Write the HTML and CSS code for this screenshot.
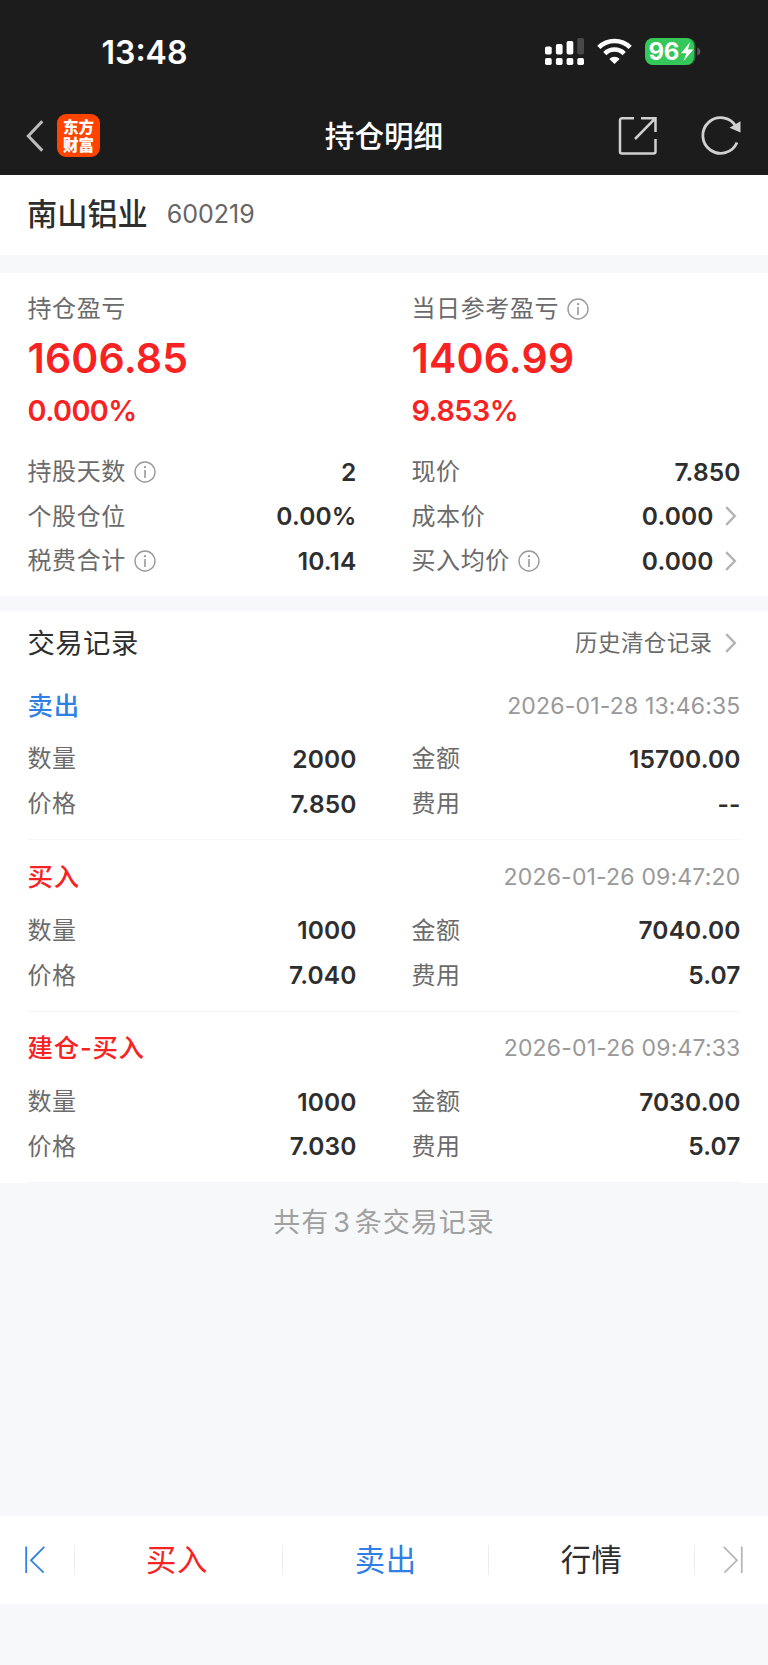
FILE: index.html
```html
<!DOCTYPE html>
<html lang="zh-CN">
<head>
<meta charset="utf-8">
<title>持仓明细</title>
<link rel="stylesheet" href="styles.css">
</head>
<body>
<svg class="defs" width="0" height="0" aria-hidden="true">
  <symbol id="info" viewBox="0 0 22 22"><circle cx="11" cy="11" r="10" fill="none" stroke="#999" stroke-width="1.4"/><path d="M11 9v8" stroke="#999" stroke-width="1.6"/><circle cx="11" cy="6.1" r="1.2" fill="#999"/></symbol>
  <symbol id="chev" viewBox="0 0 12 20"><path d="M1.2 1.2 9.8 10 1.2 18.8" fill="none" stroke="#b3b3b3" stroke-width="2.4"/></symbol>
</svg>
<div class="page">
  <header class="top">
    <div class="status">
      <span class="clock">13:48</span>
      <svg class="status-icons" width="160" height="30" viewBox="0 0 160 30">
        <g fill="#fff">
          <rect x="2" y="10.5" width="6.7" height="8" rx="1.7"/><rect x="12.9" y="8" width="6.7" height="10.5" rx="1.7"/><rect x="23.6" y="5" width="6.7" height="13.5" rx="1.7"/>
          <rect x="2" y="22" width="6.7" height="7" rx="1.7"/><rect x="12.9" y="22" width="6.7" height="7" rx="1.7"/><rect x="23.6" y="22" width="6.7" height="7" rx="1.7"/><rect x="34.3" y="22" width="6.7" height="7" rx="1.7"/>
        </g>
        <rect x="34.3" y="2" width="6.7" height="16.5" rx="1.7" fill="#484848"/>
        <g fill="none" stroke="#fff"><path d="M55.8 11.4a22.5 22.5 0 0 1 31.4 0" stroke-width="4.6"/><path d="M61.8 17.6a13.8 13.8 0 0 1 19.4 0" stroke-width="4.5"/></g>
        <path d="M66.3 22.9a7.5 7.5 0 0 1 10.4 0L71.5 28z" fill="#fff"/>
        <path d="M154.3 11.2q3.2 1.8 3.2 4.3t-3.2 4.3z" fill="#5a5a5a"/>
        <rect x="103" y="2" width="49.5" height="27" rx="8" fill="#2b6c3c"/>
        <rect x="102" y="2" width="49" height="27" rx="8" fill="#34c759"/>
        <text class="batt" x="105.5" y="24.3">96</text>
        <path d="M147.2 6 138 17.3h5.4L140.6 25l9.8-11.5h-5.5z" fill="#fff"/>
      </svg>
    </div>
    <div class="nav">
      <div class="nav-left">
        <svg width="18" height="32" viewBox="0 0 18 32"><path d="M16.3 1.3 2.3 16l14 14.6" fill="none" stroke="#bdbdbd" stroke-width="3"/></svg>
        <div class="brand">东方<br>财富</div>
      </div>
      <h1>持仓明细</h1>
      <div class="nav-right">
        <svg width="40" height="40" viewBox="0 0 40 40" fill="none" stroke="#d0d0d0" stroke-width="2.5"><path d="M17 2.2H5A2 2 0 0 0 3 4.2V35.5a2 2 0 0 0 2 2H36.5a2 2 0 0 0 2-2V23M24 2.2H38.5V16M38.5 2.2 18 23" /></svg>
        <svg width="42" height="42" viewBox="0 0 42 42"><path d="M37 27.5A17.8 17.8 0 1 1 36 11.5" fill="none" stroke="#d0d0d0" stroke-width="2.8"/><path d="M29.5 12.7 40.5 6.2V17.6z" fill="#d0d0d0"/></svg>
      </div>
    </div>
  </header>

  <section class="stock"><h2>南山铝业</h2><span>600219</span></section>

  <section class="summary">
    <div class="cols">
      <div>
        <p class="label head">持仓盈亏</p><p class="big">1606.85</p><p class="pct">0.000%</p>
        <div class="row"><span class="label">持股天数<svg class="info"><use href="#info"/></svg></span><b>2</b></div>
        <div class="row"><span class="label">个股仓位</span><b>0.00%</b></div>
        <div class="row"><span class="label">税费合计<svg class="info"><use href="#info"/></svg></span><b>10.14</b></div>
      </div>
      <div>
        <p class="label head">当日参考盈亏<svg class="info"><use href="#info"/></svg></p><p class="big">1406.99</p><p class="pct">9.853%</p>
        <div class="row"><span class="label">现价</span><b>7.850</b></div>
        <div class="row"><span class="label">成本价</span><b>0.000<svg class="chev"><use href="#chev"/></svg></b></div>
        <div class="row"><span class="label">买入均价<svg class="info"><use href="#info"/></svg></span><b>0.000<svg class="chev"><use href="#chev"/></svg></b></div>
      </div>
    </div>
  </section>

  <section class="records">
    <div class="records-head"><h3>交易记录</h3><span class="history">历史清仓记录<svg class="chev"><use href="#chev"/></svg></span></div>
    <article class="record">
      <div class="record-title"><strong class="sell">卖出</strong><time>2026-01-28 13:46:35</time></div>
      <div class="cols">
        <div><div class="row"><span class="label">数量</span><b>2000</b></div><div class="row"><span class="label">价格</span><b>7.850</b></div></div>
        <div><div class="row"><span class="label">金额</span><b>15700.00</b></div><div class="row"><span class="label">费用</span><b>--</b></div></div>
      </div>
    </article>
    <article class="record">
      <div class="record-title"><strong class="buy">买入</strong><time>2026-01-26 09:47:20</time></div>
      <div class="cols">
        <div><div class="row"><span class="label">数量</span><b>1000</b></div><div class="row"><span class="label">价格</span><b>7.040</b></div></div>
        <div><div class="row"><span class="label">金额</span><b>7040.00</b></div><div class="row"><span class="label">费用</span><b>5.07</b></div></div>
      </div>
    </article>
    <article class="record">
      <div class="record-title"><strong class="buy">建仓-买入</strong><time>2026-01-26 09:47:33</time></div>
      <div class="cols">
        <div><div class="row"><span class="label">数量</span><b>1000</b></div><div class="row"><span class="label">价格</span><b>7.030</b></div></div>
        <div><div class="row"><span class="label">金额</span><b>7030.00</b></div><div class="row"><span class="label">费用</span><b>5.07</b></div></div>
      </div>
    </article>
  </section>

  <p class="total">共有<span>3</span>条交易记录</p>

  <nav class="actions">
    <a class="edge first"><svg width="20" height="28" viewBox="0 0 20 28" fill="none" stroke="#2f80e4" stroke-width="1.8"><path d="M1.2 .5V27M19.3 .8 6 14.3 18.6 26.7"/></svg></a>
    <a class="tab buy">买入</a><a class="tab sell">卖出</a><a class="tab">行情</a>
    <a class="edge last"><svg width="20" height="28" viewBox="0 0 20 28" fill="none" stroke="#b8b8b8" stroke-width="1.8"><path d="M18.8 .5V27M.7 .8 14 14.3 1.4 26.7"/></svg></a>
  </nav>
</div>
</body>
</html>
```
FILE: styles.css
```css
* { box-sizing: border-box; margin: 0; padding: 0; }
body { background: #f6f8fa; color: #2e2e2e; font-family: Inter, "Noto Sans CJK SC", sans-serif; }
.defs { display: block; position: absolute; }
.page { width: 768px; height: 1665px; display: flex; flex-direction: column; background: #f6f8fa; }
.top { height: 174.5px; background: #1c1c1c; color: #fff; flex: none; }
.status { height: 98px; padding: 7px 65px 0 101.5px; display: flex; align-items: center; justify-content: space-between; }
.clock { font-size: 32px; font-weight: 600; }
.status-icons { display: block; margin-top: -2.5px; }
.batt { font: 700 24px Inter, sans-serif; fill: #fff; letter-spacing: -.3px; }
.nav { height: 76px; display: grid; grid-template-columns: 1fr auto 1fr; align-items: center; padding: 0 26px; }
.nav-left { display: flex; align-items: center; gap: 13px; }
.brand { width: 43px; height: 43px; margin-top: -2px; padding: 3px 0 0 6px; border-radius: 9px; background: #ff4400; font: 900 15.5px/18px "Noto Sans CJK SC", sans-serif; }
.nav h1 { font-size: 29.6px; font-weight: 500; line-height: 40px; padding-bottom: 1px; }
.nav-right { display: flex; align-items: center; justify-content: flex-end; gap: 43px; }
.stock { height: 80.5px; background: #fff; display: flex; align-items: center; gap: 19px; padding: 0 27px 2px; flex: none; }
.stock h2 { font-size: 30.2px; font-weight: 500; padding-bottom: 3px; }
.stock span { font-size: 25px; color: #666; }
.summary { margin-top: 18px; height: 323px; padding: 14px 27.5px 0; background: #fff; flex: none; }
.cols { display: grid; grid-template-columns: 1fr 1fr; column-gap: 55px; }
.label { font-size: 24px; line-height: 40px; letter-spacing: .6px; color: #6b6b6b; font-weight: 400; display: flex; align-items: center; margin-top: -1px; padding-bottom: 0; }
.row .label { margin-top: 1px; }
.head { height: 44px; margin: 0; }
.info { width: 22px; height: 22px; margin: 0 0 0 8px; display: block; }
.big { height: 55px; line-height: 55px; font-size: 41px; font-weight: 600; letter-spacing: .15px; color: #f72323; }
.pct { height: 50px; line-height: 50px; font-size: 28.8px; font-weight: 600; letter-spacing: -.55px; color: #f72323; margin-bottom: 13.2px; }
.row { height: 44.7px; display: flex; align-items: center; justify-content: space-between; }
.row b { font-size: 24.5px; font-weight: 600; letter-spacing: .12px; display: flex; align-items: center; }
.chev { width: 12px; height: 20px; margin: 0 4px 0 11px; display: block; }
.records { margin-top: 14.5px; background: #fff; padding: 6.5px 27.5px 0; flex: none; }
.records-head { height: 52px; display: flex; align-items: center; justify-content: space-between; }
.records-head h3 { font-size: 27.3px; font-weight: 400; letter-spacing: .5px; padding-bottom: 4px; }
.history { font-size: 22.5px; line-height: 40px; letter-spacing: .4px; color: #6b6b6b; display: flex; align-items: center; margin-top: -1px; }
.history .chev { margin-left: 12px; }
.record { height: 171.4px; padding-top: 10px; border-bottom: 1px solid #f4f5f6; }
.record-title { height: 53px; margin-bottom: 4.6px; display: flex; align-items: center; justify-content: space-between; }
.record-title strong { font-size: 25.4px; font-weight: 500; letter-spacing: .8px; padding-bottom: 4px; }
.record-title time { font-size: 23px; letter-spacing: .18px; color: #999; }
.buy { color: #f72323; }
.sell { color: #2f80e4; }
.total { height: 80px; line-height: 80px; text-align: center; font-size: 27px; color: #a0a0a0; letter-spacing: 1px; }
.total span { margin: 0 4px; }
.actions { margin-top: auto; margin-bottom: 61px; height: 88px; background: #fff; display: flex; align-items: center; flex: none; }
.edge { width: 74.5px; height: 30px; display: flex; align-items: center; flex: none; }
.first { padding-left: 25px; border-right: 1px solid #ececee; }
.last { width: 73px; justify-content: flex-end; padding-right: 25px; }
.tab { flex: 1; height: 30px; line-height: 30px; text-align: center; font-size: 30.4px; letter-spacing: .5px; border-right: 1px solid #ececee; }
.tab.buy { padding-right: 3px; }
```
